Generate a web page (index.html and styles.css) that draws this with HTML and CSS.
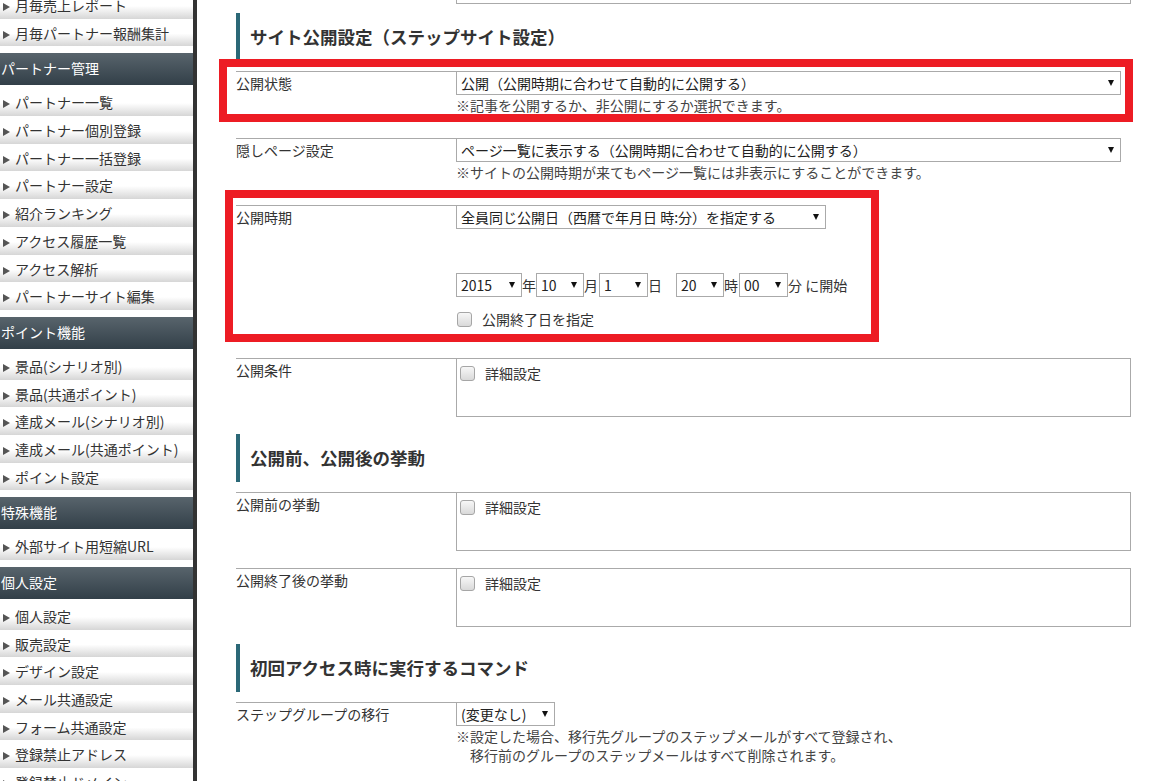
FILE: index.html
```html
<!DOCTYPE html>
<html lang="ja">
<head>
  <meta charset="UTF-8" />
  <meta name="viewport" content="width=device-width, initial-scale=1.0" />
  <title>ステップサイト設定</title>
  <link rel="stylesheet" href="styles.css">
</head>
<body>
  <aside class="sidebar">
    <ul class="nav">
      <li class="nav-item">月毎売上レポート</li>
      <li class="nav-item">月毎パートナー報酬集計</li>
      <li class="nav-head">パートナー管理</li>
      <li class="nav-item">パートナー一覧</li>
      <li class="nav-item">パートナー個別登録</li>
      <li class="nav-item">パートナー一括登録</li>
      <li class="nav-item">パートナー設定</li>
      <li class="nav-item">紹介ランキング</li>
      <li class="nav-item">アクセス履歴一覧</li>
      <li class="nav-item">アクセス解析</li>
      <li class="nav-item">パートナーサイト編集</li>
      <li class="nav-head">ポイント機能</li>
      <li class="nav-item">景品(シナリオ別)</li>
      <li class="nav-item">景品(共通ポイント)</li>
      <li class="nav-item">達成メール(シナリオ別)</li>
      <li class="nav-item">達成メール(共通ポイント)</li>
      <li class="nav-item">ポイント設定</li>
      <li class="nav-head">特殊機能</li>
      <li class="nav-item">外部サイト用短縮URL</li>
      <li class="nav-head">個人設定</li>
      <li class="nav-item">個人設定</li>
      <li class="nav-item">販売設定</li>
      <li class="nav-item">デザイン設定</li>
      <li class="nav-item">メール共通設定</li>
      <li class="nav-item">フォーム共通設定</li>
      <li class="nav-item">登録禁止アドレス</li>
      <li class="nav-item">登録禁止ドメイン</li>
    </ul>
  </aside>

  <main class="main">
    <div class="memo-tail"></div>

    <h2 class="section-title">サイト公開設定（ステップサイト設定）</h2>

    <div class="row">
      <div class="row-label">公開状態</div>
      <div class="row-body">
        <div class="select w-wide"><span>公開（公開時期に合わせて自動的に公開する）</span><i class="caret"></i></div>
        <p class="note">※記事を公開するか、非公開にするか選択できます。</p>
      </div>
    </div>

    <div class="row">
      <div class="row-label">隠しページ設定</div>
      <div class="row-body">
        <div class="select w-wide"><span>ページ一覧に表示する（公開時期に合わせて自動的に公開する）</span><i class="caret"></i></div>
        <p class="note">※サイトの公開時期が来てもページ一覧には非表示にすることができます。</p>
      </div>
    </div>

    <div class="row">
      <div class="row-label">公開時期</div>
      <div class="row-body period">
        <div class="select w-period"><span>全員同じ公開日（西暦で年月日 時:分）を指定する</span><i class="caret"></i></div>
        <div class="date-row">
          <div class="select w-year"><span>2015</span><i class="caret"></i></div><span class="unit">年</span>
          <div class="select w-48"><span>10</span><i class="caret"></i></div><span class="unit">月</span>
          <div class="select w-49 ml-1"><span>1</span><i class="caret"></i></div><span class="unit">日</span>
          <div class="select w-48 ml-14"><span>20</span><i class="caret"></i></div><span class="unit">時</span>
          <div class="select w-49 ml-1"><span>00</span><i class="caret"></i></div><span class="unit">分 に開始</span>
        </div>
        <label class="check-line"><i class="check"></i>公開終了日を指定</label>
      </div>
    </div>

    <div class="row">
      <div class="row-label">公開条件</div>
      <div class="row-body boxed">
        <div class="detail-box"><label class="check-line"><i class="check"></i>詳細設定</label></div>
      </div>
    </div>

    <h2 class="section-title">公開前、公開後の挙動</h2>

    <div class="row">
      <div class="row-label">公開前の挙動</div>
      <div class="row-body boxed">
        <div class="detail-box"><label class="check-line"><i class="check"></i>詳細設定</label></div>
      </div>
    </div>

    <div class="row">
      <div class="row-label">公開終了後の挙動</div>
      <div class="row-body boxed">
        <div class="detail-box"><label class="check-line"><i class="check"></i>詳細設定</label></div>
      </div>
    </div>

    <h2 class="section-title">初回アクセス時に実行するコマンド</h2>

    <div class="row">
      <div class="row-label">ステップグループの移行</div>
      <div class="row-body">
        <div class="select w-group"><span>(変更なし)</span><i class="caret"></i></div>
        <p class="note note-2">※設定した場合、移行先グループのステップメールがすべて登録され、<br>移行前のグループのステップメールはすべて削除されます。</p>
      </div>
    </div>

    <div class="mark mark-status"></div>
    <div class="mark mark-period"></div>
  </main>
</body>
</html>
```

FILE: styles.css
```css
body {
  margin: 0;
  display: flex;
  background-color: #fff;
  color: #333;
  font-family: "Noto Sans CJK JP", "Noto Sans", sans-serif;
  font-size: 14px;
  overflow: hidden;
}

/* sidebar */
.sidebar {
  width: 193px;
  height: 100vh;
  border-right: 4px solid #333;
  overflow: hidden;
  flex-shrink: 0;
}

.nav {
  list-style: none;
  margin: -7px 0 0 0;
  padding: 0;
}

.nav-item {
  height: 25.7px;
  line-height: 25px;
  margin-bottom: 2px;
  padding-left: 3px;
  white-space: nowrap;
  color: #333;
  background: linear-gradient(to bottom, #fff 0%, #fff 50%, #d6d6d6 100%);
}

.nav-item::before {
  content: "";
  display: inline-block;
  width: 0;
  height: 0;
  border-top: 4px solid transparent;
  border-bottom: 4px solid transparent;
  border-left: 7px solid #555;
  margin-right: 5px;
  vertical-align: 0;
}

.nav-head {
  height: 32px;
  line-height: 31px;
  margin: 7px 0 5px;
  padding-left: 1px;
  color: #fff;
  white-space: nowrap;
  background: linear-gradient(to bottom, #58646c 0%, #323f48 100%);
}

/* main */
.main {
  position: relative;
  padding-left: 39px;
  width: 895px;
}

.memo-tail {
  height: 3px;
  width: 673px;
  margin-left: 220px;
  border: 1px solid #aaa;
  border-top: 0;
  margin-bottom: 9px;
}

.section-title {
  margin: 1px 0 10px;
  height: 48px;
  line-height: 47px;
  border-left: 4px solid #2b6877;
  padding-left: 10px;
  font-size: 17.5px;
  font-weight: bold;
  color: #333;
}

.row {
  display: flex;
  margin-bottom: 17px;
}

.row-label {
  width: 220px;
  flex-shrink: 0;
  box-sizing: border-box;
  border-top: 1px solid #aaa;
  padding-top: 1px;
  line-height: 20px;
}

.row-body {
  width: 675px;
  padding-bottom: 6px;
}

.row-body.boxed {
  padding-bottom: 0;
}

.period {
  padding-bottom: 12px;
}

.note {
  margin: 0;
  line-height: 20px;
  font-size: 14px;
  color: #444;
}

.note-2 {
  margin-top: 1px;
  line-height: 19px;
  padding-left: 1em;
  text-indent: -1em;
}

/* fake select */
.select {
  display: flex;
  align-items: center;
  justify-content: space-between;
  box-sizing: border-box;
  height: 24px;
  border: 1px solid #aaa;
  padding: 0 6px 0 4px;
  background-color: #fff;
  color: #222;
  white-space: nowrap;
}

.caret {
  width: 0;
  height: 0;
  border-left: 3px solid transparent;
  border-right: 3px solid transparent;
  border-top: 6px solid #111;
}

.w-wide { width: 665px; }
.w-period { width: 370px; }
.w-year { width: 66px; }
.w-48 { width: 48px; }
.w-49 { width: 49px; }
.w-group { width: 99px; }
.ml-1 { margin-left: 1px; }
.ml-14 { margin-left: 14px; }

.date-row {
  display: flex;
  align-items: center;
  margin-top: 44px;
}

.unit {
  line-height: 24px;
  white-space: nowrap;
}

.check-line {
  display: flex;
  align-items: center;
  height: 20px;
  margin-top: 12px;
  padding-left: 1px;
}

.check {
  width: 15px;
  height: 15px;
  box-sizing: border-box;
  border: 1px solid #a6a6a6;
  border-radius: 3px;
  background: linear-gradient(to bottom, #f7f7f7, #d9d9d9);
  margin-right: 10px;
}

.detail-box {
  box-sizing: border-box;
  height: 59px;
  border: 1px solid #aaa;
  padding: 4px 2px;
}

.detail-box .check-line {
  margin-top: 0;
}

/* annotation frames drawn on top of the form */
.mark {
  position: absolute;
  box-sizing: border-box;
  border: 8px solid #ed1c24;
}

.mark-status {
  left: 22px;
  top: 59px;
  width: 914px;
  height: 63px;
}

.mark-period {
  left: 28px;
  top: 190px;
  width: 654px;
  height: 152px;
}
```
